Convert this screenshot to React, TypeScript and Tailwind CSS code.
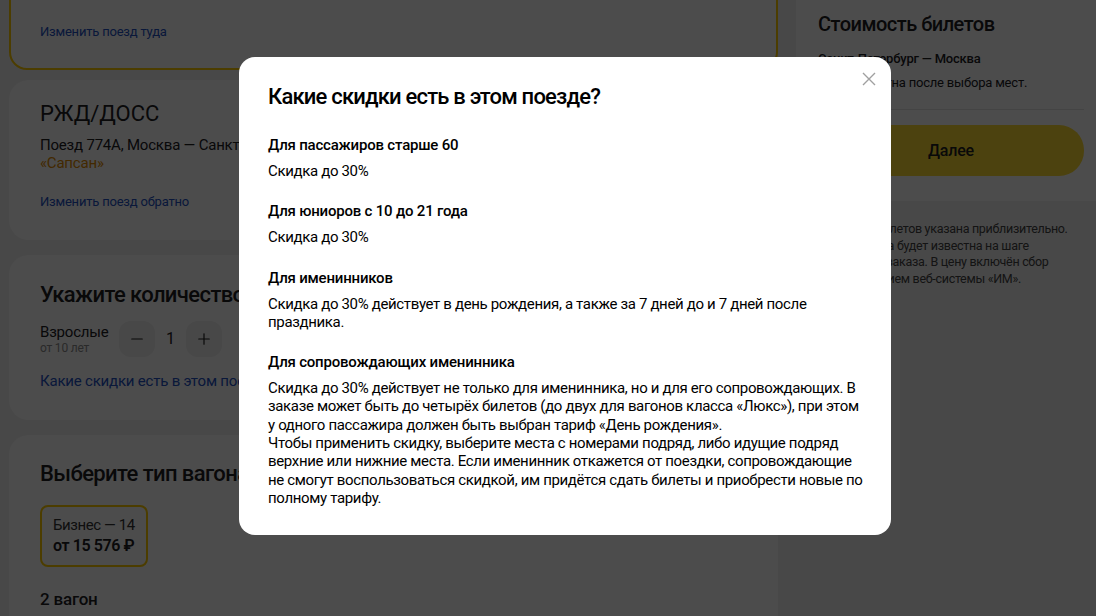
import { Minus, Plus } from 'lucide-react'

const font = { fontFamily: 'Roboto, "Noto Sans", Arial, sans-serif' }

const discounts = [
  { title: 'Для пассажиров старше 60', text: ['Скидка до 30%'] },
  { title: 'Для юниоров с 10 до 21 года', text: ['Скидка до 30%'] },
  {
    title: 'Для именинников',
    text: ['Скидка до 30% действует в день рождения, а также за 7 дней до и 7 дней после праздника.'],
  },
  {
    title: 'Для сопровождающих именинника',
    text: [
      'Скидка до 30% действует не только для именинника, но и для его сопровождающих. В заказе может быть до четырёх билетов (до двух для вагонов класса «Люкс»), при этом у одного пассажира должен быть выбран тариф «День рождения».',
      'Чтобы применить скидку, выберите места с номерами подряд, либо идущие подряд верхние или нижние места. Если именинник откажется от поездки, сопровождающие не смогут воспользоваться скидкой, им придётся сдать билеты и приобрести новые по полному тарифу.',
    ],
  },
]

function DiscountsModal() {
  return (
    <div className="fixed inset-0 bg-black/70">
      <div className="absolute left-[239px] top-[57px] w-[652px] bg-white rounded-[16px] pl-[29px] pr-[24px] pt-[25px] pb-[28px] text-[#000]">
        <button className="absolute right-[13px] top-[13px] w-[18px] h-[18px] flex items-center justify-center text-[#a0a0a0]">
          <svg width="14" height="14" viewBox="0 0 14 14" fill="none" stroke="currentColor" strokeWidth="1.4">
            <path d="M1 1l12 12M13 1L1 13" />
          </svg>
        </button>
        <h2 className="text-[22px] leading-[30px] font-medium tracking-[-0.8px]">Какие скидки есть в этом поезде?</h2>
        <div className="mt-[23px] space-y-[21px] tracking-[-0.34px]">
          {discounts.map(d => (
            <div key={d.title}>
              <h3 className="text-[15px] leading-[20px] font-medium tracking-[-0.2px]">{d.title}</h3>
              <div className="mt-[7px] text-[15px] leading-[18.3px]">
                {d.text.map(t => <p key={t}>{t}</p>)}
              </div>
            </div>
          ))}
        </div>
      </div>
    </div>
  )
}

export default function App() {
  return (
    <div className="relative h-[616px] overflow-hidden bg-[#f2f2f2] text-[#21201f] tracking-[-0.2px]" style={font}>
      <div className="flex gap-[18px] pl-[9px]">
        <div className="w-[769px] shrink-0 flex flex-col">
          {/* выбранный поезд туда */}
          <div className="-mt-[56px] h-[126px] bg-white border-2 border-[#ffcc00] rounded-[18px] flex flex-col justify-end px-[29px] pb-[28px]">
            <a className="text-[13px] leading-[16px] text-[#2250c4]">Изменить поезд туда</a>
          </div>

          <div className="mt-[10px] bg-white rounded-[20px] px-[31px] pt-[19px] pb-[30px]">
            <div className="text-[22px] leading-[30px] tracking-[0px]">РЖД/ДОСС</div>
            <div className="mt-[7px] text-[15px] leading-[18px]">
              Поезд 774А, Москва — Санкт-Петербург, отправление 21 июля<br />
              <span className="text-[#e08a00]">«Сапсан»</span>
            </div>
            <a className="block mt-[22px] text-[13px] leading-[16px] text-[#2250c4]">Изменить поезд обратно</a>
          </div>

          <div className="mt-[15px] bg-white rounded-[20px] px-[31px] pt-[26px] pb-[30px]">
            <div className="text-[22px] leading-[28px] font-medium tracking-[-0.6px]">Укажите количество пассажиров</div>
            <div className="mt-[12px] flex items-center">
              <div className="w-[79px]">
                <div className="text-[15px] leading-[18px]">Взрослые</div>
                <div className="text-[12px] leading-[14px] text-[#8c8c8c]">от 10 лет</div>
              </div>
              <button className="w-[36px] h-[36px] rounded-[12px] bg-[#f0f0f0] flex items-center justify-center">
                <Minus className="w-[18px] h-[18px]" strokeWidth={1.6} />
              </button>
              <span className="w-[31px] text-center text-[16px]">1</span>
              <button className="w-[36px] h-[36px] rounded-[12px] bg-[#f0f0f0] flex items-center justify-center">
                <Plus className="w-[18px] h-[18px]" strokeWidth={1.6} />
              </button>
            </div>
            <a className="block mt-[15px] text-[15px] leading-[18px] text-[#2250c4]">Какие скидки есть в этом поезде?</a>
          </div>

          <div className="mt-[15px] bg-white rounded-[20px] px-[31px] pt-[25px] pb-[30px]">
            <div className="text-[22px] leading-[28px] font-medium tracking-[-0.6px]">Выберите тип вагона</div>
            <div className="mt-[17px] inline-flex flex-col border-2 border-[#ffcc00] rounded-[8px] px-[11px] py-[9px] tracking-[-0.4px]">
              <span className="text-[15px] leading-[19px] text-[#333]">Бизнес — 14</span>
              <span className="text-[16px] leading-[21px] font-semibold">от 15 576 ₽</span>
            </div>
            <div className="mt-[21px] text-[17px] leading-[22px] font-medium">2 вагон</div>
          </div>
        </div>

        <div className="w-[300px] shrink-0 flex flex-col">
          <div className="bg-white rounded-bl-[20px] pl-[22px] pr-[12px] pt-[10px] pb-[25px]">
            <div className="text-[20px] leading-[28px] font-medium tracking-[-0.5px]">Стоимость билетов</div>
            <div className="mt-[13px] text-[13px] leading-[16px] font-medium">Санкт-Петербург — Москва</div>
            <div className="mt-[8px] text-[13px] leading-[16px]">Цена известна после выбора мест.</div>
            <div className="mt-[18px] h-px bg-[#e5e5e5]" />
            <button className="mt-[15px] w-full h-[51px] rounded-[25px] bg-[#ffdd33] text-[16px] font-medium">Далее</button>
          </div>
          <p className="mt-[20px] pl-[16px] text-[12.5px] leading-[16.7px] text-[#444] tracking-[-0.3px]">
            Стоимость билетов указана приблизительно.<br />
            Итоговая цена будет известна на шаге<br />
            оформления заказа. В цену включён сбор<br />
            за пользованием веб-системы «ИМ».
          </p>
        </div>
      </div>

      <DiscountsModal />
    </div>
  )
}
